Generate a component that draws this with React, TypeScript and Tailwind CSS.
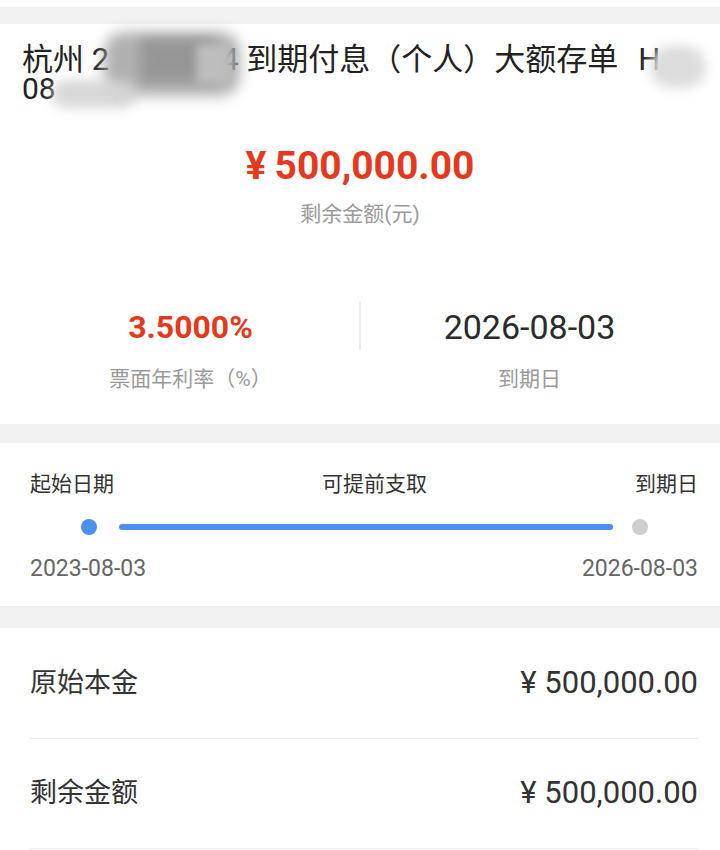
import React from "react";

function Smudge({ className }: { className: string }) {
  return <div className={`pointer-events-none absolute ${className}`} />;
}

function Metric({ value, label, red }: { value: string; label: string; red?: boolean }) {
  return (
    <div className="flex flex-1 flex-col items-center pt-[5px]">
      <div
        className={
          red
            ? "text-[32px] leading-[40px] font-bold text-[#e5391d]"
            : "text-[34px] leading-[40px] text-[#2b2b2b]"
        }
      >
        {value}
      </div>
      <div className="mt-[20px] text-[21px] leading-[24px] text-[#9a9a9a]">{label}</div>
    </div>
  );
}

function Row({ label, value }: { label: string; value: string }) {
  return (
    <div className="flex h-[110px] items-center justify-between border-b border-[#ececec]">
      <span className="text-[27px] text-[#333]">{label}</span>
      <span className="text-[31px] text-[#333]">{value}</span>
    </div>
  );
}

export default function App() {
  return (
    <div className="min-h-[850px] bg-white font-['Roboto','Noto_Sans_CJK_SC',sans-serif]">
      <div className="h-[7px] bg-white" />
      <div className="h-[17px] bg-[#f2f2f2]" />

      {/* summary card */}
      <div className="bg-white pb-[33px]">
        <div className="relative px-[22px] pt-[21px] text-[31px] text-[#222]">
          <div className="leading-[30px] whitespace-nowrap">
            杭州 2<span className="inline-block w-[112px]" />4 到期付息（个人）大额存单<span className="ml-[20px]">H</span>
          </div>
          <div className="text-[30px] leading-[28px]">08</div>
          <Smudge className="left-[104px] top-[8px] h-[64px] w-[136px] rounded-[20px] bg-[#a8a8a8] opacity-90 blur-[7px]" />
          <Smudge className="left-[140px] top-[14px] h-[44px] w-[76px] bg-[#8c8c8c] opacity-70 blur-[6px]" />
          <Smudge className="left-[196px] top-[20px] h-[40px] w-[34px] bg-[#bdbdbd] blur-[4px]" />
          <Smudge className="left-[52px] top-[56px] h-[28px] w-[84px] rounded-full bg-[#d4d4d4] opacity-90 blur-[6px]" />
          <Smudge className="left-[650px] top-[22px] h-[42px] w-[56px] rounded-full bg-[#dcdcdc] blur-[6px]" />
        </div>

        <div className="mt-[39px] text-center text-[39px] leading-[48px] font-bold text-[#e5391d]">
          ¥<span className="ml-[8px]">500,000.00</span>
        </div>
        <div className="mt-[12px] text-center text-[21px] leading-[24px] text-[#9a9a9a]">剩余金额(元)</div>

        <div className="mt-[76px] flex px-[22px]">
          <Metric value="3.5000%" label="票面年利率（%）" red />
          <div className="h-[48px] w-[2px] bg-[#ececec]" />
          <Metric value="2026-08-03" label="到期日" />
        </div>
      </div>

      <div className="h-[19px] bg-[#f2f2f2]" />

      {/* timeline card */}
      <div className="bg-white pt-[27px] pb-[23px]">
        <div className="flex justify-between pl-[30px] pr-[22px] text-[21px] leading-[28px] text-[#333]">
          <span>起始日期</span>
          <span>可提前支取</span>
          <span>到期日</span>
        </div>
        <div className="mt-[21px] flex items-center pl-[81px] pr-[72px]">
          <div className="h-4 w-4 rounded-full bg-[#4a90f2]" />
          <div className="ml-[22px] mr-[19px] h-[6px] flex-1 rounded-full bg-[#4a90f2]" />
          <div className="h-4 w-4 rounded-full bg-[#cfcfcf]" />
        </div>
        <div className="mt-[20px] flex justify-between pl-[30px] pr-[22px] text-[23px] leading-[28px] text-[#666]">
          <span>2023-08-03</span>
          <span>2026-08-03</span>
        </div>
      </div>

      <div className="h-[22px] border-t border-[#e9e9e9] bg-[#f2f2f2]" />

      {/* detail rows */}
      <div className="bg-white pl-[30px] pr-[22px] pt-px">
        <Row label="原始本金" value="¥ 500,000.00" />
        <Row label="剩余金额" value="¥ 500,000.00" />
      </div>
    </div>
  );
}
